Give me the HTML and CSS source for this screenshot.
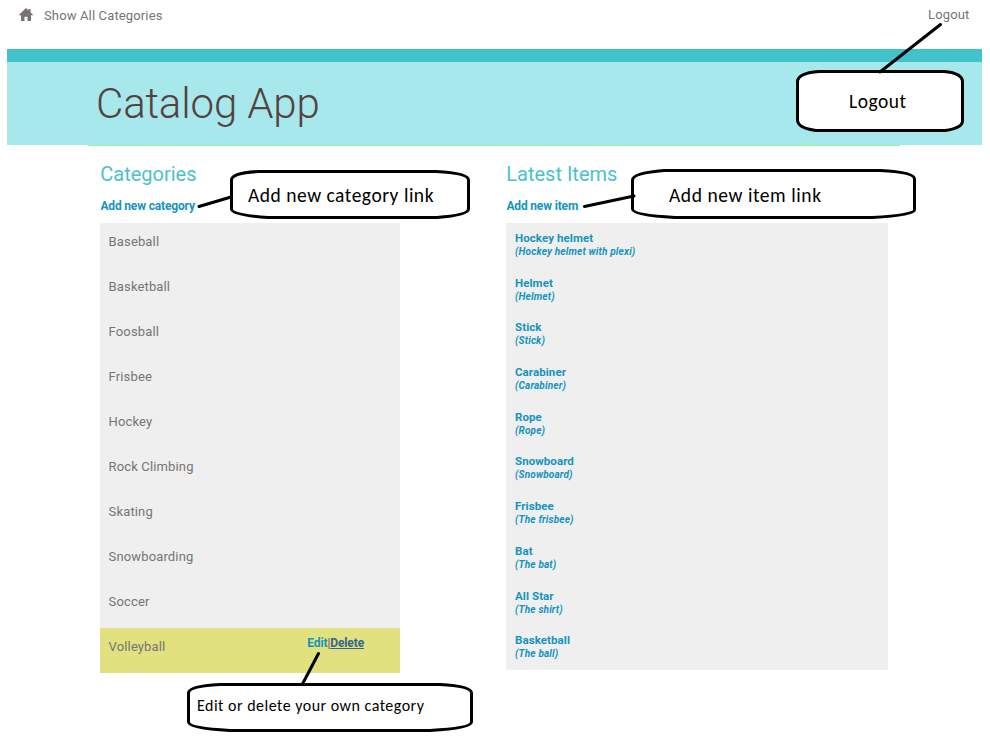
FILE: index.html
```html
<!DOCTYPE html>
<html lang="en">
<head>
<meta charset="utf-8">
<title>Catalog App</title>
<link rel="stylesheet" href="styles.css">
</head>
<body>
<nav class="topbar">
  <a class="home"><svg class="home-icon" width="14" height="13" viewBox="0 0 14 13"><path d="M7 0 L9.7 2.5 V1 H11.6 V4.3 L14 6.7 V7.3 H12 V13 H8.5 V8.7 H5.5 V13 H2 V7.3 H0 V6.7 Z"/></svg><span>Show All Categories</span></a>
  <a class="logout">Logout</a>
</nav>
<header class="banner"><h1>Catalog App</h1></header>
<div class="rule"></div>
<main class="columns">
  <section class="categories">
    <h2>Categories</h2>
    <a class="add">Add new category</a>
    <ul class="category-list">
      <li>Baseball</li>
      <li>Basketball</li>
      <li>Foosball</li>
      <li>Frisbee</li>
      <li>Hockey</li>
      <li>Rock Climbing</li>
      <li>Skating</li>
      <li>Snowboarding</li>
      <li>Soccer</li>
      <li class="own"><span>Volleyball</span><span class="actions"><a class="edit">Edit</a>|<a class="delete">Delete</a></span></li>
    </ul>
  </section>
  <section class="items">
    <h2>Latest Items</h2>
    <a class="add">Add new item</a>
    <ul class="item-list">
      <li><b>Hockey helmet</b><i>(Hockey helmet with plexi)</i></li>
      <li><b>Helmet</b><i>(Helmet)</i></li>
      <li><b>Stick</b><i>(Stick)</i></li>
      <li><b>Carabiner</b><i>(Carabiner)</i></li>
      <li><b>Rope</b><i>(Rope)</i></li>
      <li><b>Snowboard</b><i>(Snowboard)</i></li>
      <li><b>Frisbee</b><i>(The frisbee)</i></li>
      <li><b>Bat</b><i>(The bat)</i></li>
      <li><b>All Star</b><i>(The shirt)</i></li>
      <li><b>Basketball</b><i>(The ball)</i></li>
    </ul>
  </section>
</main>
<svg class="callouts" width="990" height="736" viewBox="0 0 990 736">
  <g class="shape">
    <path d="M819 71.500H944Q962.500 73 962.500 82V121Q962.500 128 945 130.500H816Q797.500 128 797.500 120V82Q797.500 73 819 71.500Z"/>
    <path d="M258 171.500H436Q468.500 173 468.500 180V209Q468.500 215 437 217.500H268Q231.500 215 231.500 209V180Q231.500 173 258 171.500Z"/>
    <path d="M664 170.500H880Q914.500 172 914.500 179V210Q914.500 215 872 217.500H675Q632.500 215 632.500 209V180Q632.500 173 664 170.500Z"/>
    <path d="M220 684.500H440Q471.500 686 471.500 693V722Q471.500 728 430 730.500H230Q188.500 728 188.500 722V693Q188.500 686 220 684.500Z"/>
    <path d="M940.500 24.500L880 72M199 206.500L231 197M584.500 206.500L634 196M318.500 653.500L302.500 684"/>
  </g>
  <text x="849" y="108" font-size="19.500" textLength="57">Logout</text>
  <text x="248" y="202" font-size="19.500" textLength="185.500">Add new category link</text>
  <text x="669" y="202" font-size="19.500" textLength="152">Add new item link</text>
  <text x="197" y="711" font-size="16" textLength="227">Edit or delete your own category</text>
</svg>
</body>
</html>
```
FILE: styles.css
```css
* { box-sizing: border-box; }
body {
  margin: 0;
  height: 736px;
  overflow: hidden;
  background: #fff;
  color: #757575;
  font-family: Roboto, sans-serif;
  font-size: 13px;
  letter-spacing: 0.14px;
}
h1, h2, ul { margin: 0; padding: 0; font-weight: 400; }
ul { list-style: none; }
.topbar {
  display: flex;
  justify-content: space-between;
  height: 49px;
  padding: 8px 20.5px 0 19px;
  line-height: 15px;
}
.home { display: flex; gap: 11px; }
.home-icon { fill: #7b7272; }
.logout { margin-top: -1px; }
.banner {
  height: 96px;
  margin: 0 8px 0 7px;
  padding: 14px 0 0 89px;
  border-top: 13px solid #42c3cb;
  background: #a7e8ed;
}
h1 {
  color: #56423d;
  font-size: 42px;
  font-weight: 300;
  line-height: 56px;
  letter-spacing: -0.15px;
}
.rule { width: 812px; height: 1px; margin-left: 88px; background: #98f59c; }
.columns {
  display: grid;
  grid-template-columns: 300px 382px;
  column-gap: 106px;
  align-items: start;
  padding: 16px 0 0 100px;
}
h2 { padding-left: 0.3px; color: #4bc2cb; font-size: 20px; line-height: 24px; letter-spacing: 0; }
.add {
  display: block;
  height: 24px;
  margin-top: 13px;
  padding-left: 0.4px;
  color: #1494be;
  font-size: 12px;
  font-weight: 700;
  line-height: 14px;
  letter-spacing: -0.16px;
}
.category-list, .item-list { background: #efefef; }
.category-list li {
  display: flex;
  justify-content: space-between;
  height: 45px;
  padding: 11px 36px 0 8.6px;
  line-height: 16px;
}
.category-list .own { background: #e1e180; }
.actions {
  margin-top: -4px;
  color: #8b3b54;
  font-size: 12px;
  letter-spacing: -0.12px;
}
.edit { color: #1494be; font-weight: 700; }
.delete { color: #33668e; font-weight: 700; text-decoration: underline; }
.item-list {
  color: #1494be;
  letter-spacing: 0.08px;
}
.item-list li { height: 44.7px; padding: 8px 9px 0; }
.item-list b { display: block; font-size: 11.500px; line-height: 14px; }
.item-list i { display: block; font-size: 10px; font-weight: 700; line-height: 13px; letter-spacing: 0.17px; }
.callouts {
  position: absolute;
  top: 0;
  left: 0;
  fill: #000;
  font-family: Calibri, Carlito, "Open Sans", sans-serif;
  letter-spacing: 0;
}
.shape { fill: #fff; stroke: #000; stroke-width: 3; stroke-linecap: round; }
```
